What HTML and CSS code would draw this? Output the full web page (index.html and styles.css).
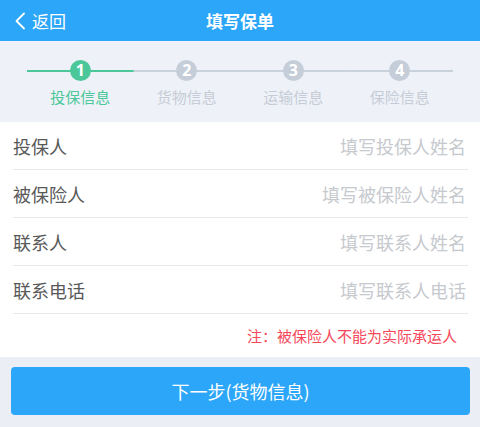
FILE: index.html
```html
<!DOCTYPE html>
<html lang="zh-CN">
<head>
<meta charset="utf-8">
<title>填写保单</title>
<link rel="stylesheet" href="styles.css">
</head>
<body>
<header class="topbar">
  <a class="back">
    <svg class="chev" viewBox="0 0 12 18" width="12" height="18"><path d="M10 1.5 L2.5 9 L10 16.5" fill="none" stroke="#fff" stroke-width="1.8" stroke-linecap="round" stroke-linejoin="round"/></svg>
    <span>返回</span>
  </a>
  <h1 class="title">填写保单</h1>
</header>
<section class="steps">
  <div class="step active">
    <div class="track"><span class="dot">1</span></div>
    <div class="label">投保信息</div>
  </div>
  <div class="step">
    <div class="track"><span class="dot">2</span></div>
    <div class="label">货物信息</div>
  </div>
  <div class="step">
    <div class="track"><span class="dot">3</span></div>
    <div class="label">运输信息</div>
  </div>
  <div class="step">
    <div class="track"><span class="dot">4</span></div>
    <div class="label">保险信息</div>
  </div>
</section>
<section class="form">
  <div class="row"><span class="name">投保人</span><span class="ph">填写投保人姓名</span></div>
  <div class="row"><span class="name">被保险人</span><span class="ph">填写被保险人姓名</span></div>
  <div class="row"><span class="name">联系人</span><span class="ph">填写联系人姓名</span></div>
  <div class="row"><span class="name">联系电话</span><span class="ph">填写联系人电话</span></div>
  <div class="note">注：被保险人不能为实际承运人</div>
</section>
<div class="actions">
  <button class="next">下一步(货物信息)</button>
</div>
</body>
</html>
```
FILE: styles.css
```css
* { box-sizing: border-box; }
html, body { margin: 0; padding: 0; }
body {
  background: #ebeff5;
  font-family: "Noto Sans CJK SC", "Noto Sans", sans-serif;
  width: 480px;
}
.topbar {
  height: 41px;
  background: #2ca6f9;
  color: #fff;
  display: flex;
  align-items: center;
  justify-content: center;
  position: relative;
}
.back {
  position: absolute;
  left: 14px;
  top: 0;
  height: 41px;
  display: flex;
  align-items: center;
  gap: 6px;
  font-size: 17px;
  color: #fff;
}
.chev { display: block; }
.title {
  margin: 0;
  font-size: 17px;
  font-weight: bold;
  line-height: 41px;
}
.steps {
  height: 81px;
  background: #eef2f8;
  display: flex;
  padding: 19px 27px 0;
}
.step {
  flex: 1;
  display: flex;
  flex-direction: column;
  align-items: center;
}
.track {
  width: 100%;
  height: 21px;
  display: flex;
  justify-content: center;
  align-items: center;
  background: linear-gradient(#c9d1db, #c9d1db) center / 100% 2px no-repeat;
}
.step.active .track {
  background: linear-gradient(#4cc79a, #4cc79a) center / 100% 2px no-repeat;
}
.dot {
  width: 21px;
  height: 21px;
  border-radius: 50%;
  background: #c5cdd8;
  color: #fff;
  font-family: "Noto Sans", "Liberation Sans", sans-serif;
  font-weight: bold;
  font-size: 16px;
  line-height: 21px;
  text-align: center;
}
.step.active .dot { background: #4cc79a; }
.label {
  margin-top: 6px;
  font-size: 15px;
  line-height: 20px;
  color: #c6ccd6;
}
.step.active .label { color: #4cc79a; }
.form {
  background: #fff;
  padding: 0 12px 0 13px;
}
.row {
  height: 48px;
  border-bottom: 1px solid #e6e8ec;
  display: flex;
  align-items: center;
  justify-content: space-between;
  padding-right: 2px;
  font-size: 18px;
}
.name { color: #595959; }
.ph { color: #c6c9ce; }
.note {
  height: 43px;
  display: flex;
  align-items: center;
  justify-content: flex-end;
  padding-right: 11px;
  color: #f5475a;
  font-size: 15px;
}
.actions {
  padding: 10px 10px 0 11px;
}
.next {
  display: block;
  width: 100%;
  height: 48px;
  border: none;
  border-radius: 4px;
  background: #2ca6f9;
  color: #fff;
  font-family: "Noto Sans CJK SC", "Noto Sans", sans-serif;
  font-size: 18px;
  padding: 0;
}
```
